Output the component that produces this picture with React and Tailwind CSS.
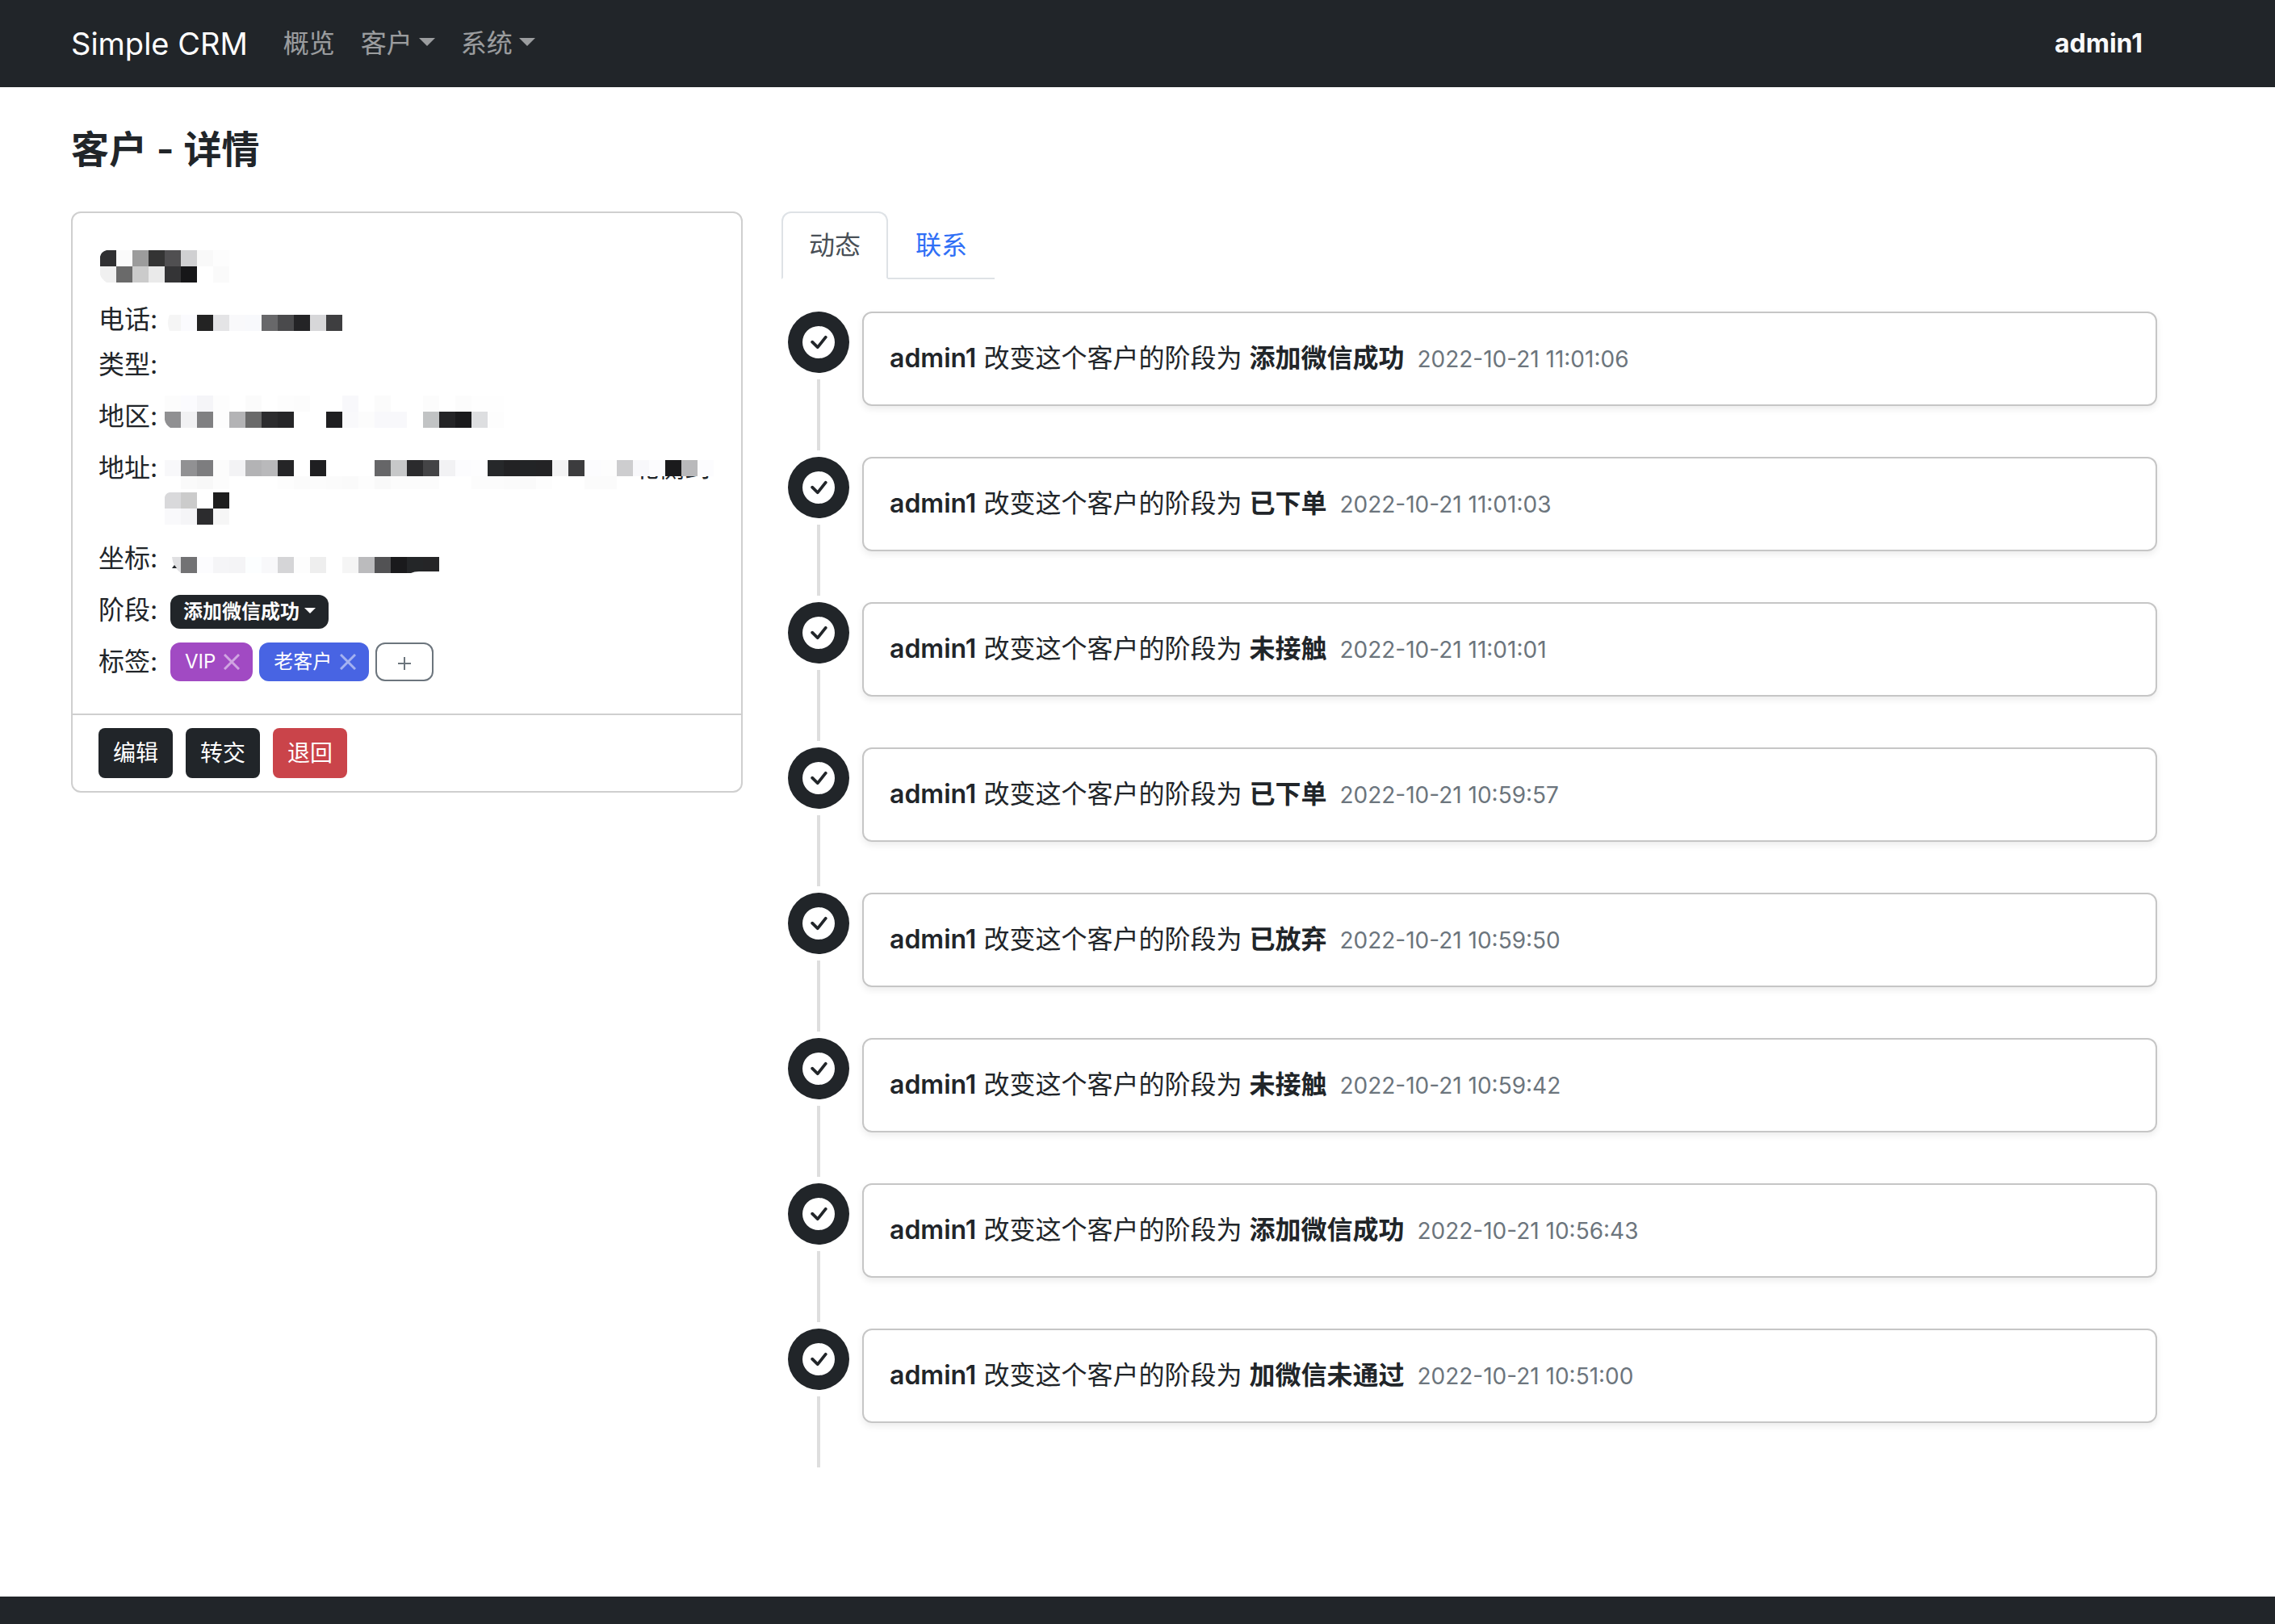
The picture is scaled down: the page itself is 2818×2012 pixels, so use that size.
const FONT = "font-['Inter','Noto_Sans_CJK_SC',sans-serif]";

const NAME = [
  { x: 2, y: 0, cells: ['#303032', '#fbfbfb', '#9c9c9c', '#343434', '#504f51', '#d0d0d2', '#f9f9f9', '#fdfdfd'] },
  { x: 2, y: 20, cells: ['#f0f0f0', '#6a6a6a', '#cbcbcb', '#eaeaea', '#343436', '#161618', '#ffffff', '#fafafa'] },
];

const PHONE = [
  { x: 0, y: 18, cells: ['#f5f5f5', '#fbfbfe', '#232323', '#e4e4e6', '#f9f9fb', '#f8f9fc', '#68686a', '#4a4a4c', '#242426', '#d7d7d9', '#3e3e40'] },
];

const REGION = [
  { x: 0, y: -2, cells: ['#fcfcfc', '#fbfbfe', '#f5f5f8', '#fdfdfd', null, '#fbfbfb', null, '#fdfdfd', '#fcfcfc', null, null, '#f8f8fb', null, '#fbfbfb', null, null, '#fcfcfc', null, '#fcfcfc', '#fefefe', '#fefefe'] },
  { x: 0, y: 18, cells: ['#909092', '#f1f1f3', '#808082', '#fdfdfd', '#b3b3b5', '#6a6a6a', '#2c2c2e', '#262628', null, null, '#1f1f21', '#f9f9fb', '#fcfcfc', '#f8f8fb', '#f8f8fb', null, '#c1c3c4', '#242426', '#1a1a1c', '#dddee0', '#fdfdfd'] },
];

const ADDRESS = [
  { x: 0, y: 14, cells: ['#f8f8fa', '#919193', '#7d7d7f', '#fcfcfc', '#f3f3f5', '#b3b3b5', '#b9b9bb', '#252527', null, '#1f1f21', null, null, null, '#666668', '#c7c8c9', '#2b2b2d', '#444446', '#f2f2f4', '#fcfcfe', '#fdfdfe', '#26282a', '#222224', '#222426', '#232325', '#f3f3f4', '#3c3c3e', '#fcfcfe', '#fdfdfd', '#cdcdcf', '#f8f8fb', '#fcfcfe', '#1a1a1c', '#b9b9bb', '#fcfcfe'] },
  { x: 0, y: 34, h: 16, cells: [null, '#fafafa', '#f8f8f8', '#fcfcfc', null, null, null, '#fdfdfd', '#fbfbfb', '#fcfcfc', '#fbfbfb', '#fafafa', '#fdfdfd', '#f9f9f9', '#fcfcfc', '#fcfcfc', '#fcfcfc', null, null, '#fcfcfc', '#fcfcfc', '#fbfbfb', '#fafafa', '#fdfdfd', null, null, '#fbfbfb', '#fbfbfb'] },
  { x: 0, y: 54, cells: ['#d9d9db', '#cbcbcb', null, '#1e1e1e'] },
  { x: 0, y: 74, cells: ['#f9f9fb', '#f5f5f7', '#2c2c2e', '#f6f6f6'] },
];

const COORDS = [
  { x: 20, y: 22, cells: ['#727274', '#fcfcfe', '#f5f5f7', '#f4f4f6', '#fcfeff', '#f8f8fa', '#d5d5d7', '#fdfdfd', '#eeeeee', null, '#f5f5f5', '#bbbbbd', '#525254', '#1a1a1c', '#242628', '#252527'] },
];

const ACTIVITY = [
  ['添加微信成功', '2022-10-21 11:01:06'],
  ['已下单', '2022-10-21 11:01:03'],
  ['未接触', '2022-10-21 11:01:01'],
  ['已下单', '2022-10-21 10:59:57'],
  ['已放弃', '2022-10-21 10:59:50'],
  ['未接触', '2022-10-21 10:59:42'],
  ['添加微信成功', '2022-10-21 10:56:43'],
  ['加微信未通过', '2022-10-21 10:51:00'],
];

/* Pixelated block that hides private data */
function Mosaic({ rows, width, height, className = '', children }) {
  return (
    <svg width={width} height={height} className={`block overflow-visible ${className}`} shapeRendering="crispEdges" aria-hidden="true">
      {rows.map((r) =>
        r.cells.map((c, i) => c && <rect key={`${r.y}-${i}`} x={r.x + i * 20} y={r.y} width="20" height={r.h || 20} fill={c} />)
      )}
      {children}
    </svg>
  );
}

/* White wedge that rounds off a corner of a mosaic */
function Corner({ d }) {
  return <path d={d} fill="#fff" shapeRendering="auto" />;
}

function Caret({ className }) {
  return (
    <svg viewBox="0 0 20 10" className={className} fill="currentColor" aria-hidden="true">
      <path d="M0 0h20L10 10z" />
    </svg>
  );
}

function CheckIcon() {
  return (
    <svg viewBox="0 0 16 16" className="size-10" fill="#fff" aria-hidden="true">
      <path d="M16 8A8 8 0 1 1 0 8a8 8 0 0 1 16 0zm-3.97-3.03a.75.75 0 0 0-1.08.022L7.477 9.417 5.384 7.323a.75.75 0 0 0-1.06 1.06L6.97 11.03a.75.75 0 0 0 1.079-.02l3.992-4.99a.75.75 0 0 0-.01-1.05z" />
    </svg>
  );
}

function Row({ label, className = 'mt-4', children }) {
  return (
    <div className={`flex ${className}`}>
      <dt className="w-[82px] shrink-0">{label}</dt>
      <dd className="min-w-0 flex-1">{children}</dd>
    </div>
  );
}

function Tag({ color, children }) {
  return (
    <span className={`flex h-12 items-center gap-[10px] rounded-xl pr-4 pl-[18px] text-[24px] leading-[36px] text-white ${color}`}>
      {children}
      <button type="button" aria-label="移除标签" className="opacity-50">
        <svg viewBox="0 0 20 20" className="size-5" fill="none" stroke="#fff" strokeWidth="3" aria-hidden="true">
          <path d="M1 1l18 18M19 1L1 19" />
        </svg>
      </button>
    </span>
  );
}

function ActionButton({ color, children }) {
  return (
    <button type="button" className={`h-[62px] rounded-lg px-[18px] text-[28px] leading-[42px] text-white ${color}`}>
      {children}
    </button>
  );
}

function Navbar() {
  return (
    <nav className="flex h-[108px] items-center bg-[#212529] pr-[164px] pl-[88px] text-[32px] leading-[48px] text-white/55">
      <a href="#" className="mr-11 text-[38px] leading-[60px] text-white">Simple CRM</a>
      <div className="flex gap-8">
        <a href="#">概览</a>
        <button type="button" className="flex items-center gap-2">
          客户
          <Caret className="mb-1 h-[10px] w-5" />
        </button>
        <button type="button" className="flex items-center gap-2">
          系统
          <Caret className="mb-1 h-[10px] w-5" />
        </button>
      </div>
      <a href="#" className="ml-auto font-bold text-[#f8f9fa]">admin1</a>
    </nav>
  );
}

function CustomerCard() {
  return (
    <section className="self-start rounded-xl border-2 border-[#cfcfcf]">
      <div className="px-8 pt-8 pb-10">
        <div className="h-[76px] pt-[14px]">
          <Mosaic rows={NAME} width={162} height={40}>
            <Corner d="M0 0h10Q3 2 2 8H0z" />
            <Corner d="M0 40h10Q3 35 2 30H0z" />
          </Mosaic>
        </div>
        <dl>
          <Row label="电话:" className="">
            <Mosaic rows={PHONE} width={220} height={48}>
              <Corner d="M0 18h6Q2 28 6 38H0z" />
            </Mosaic>
          </Row>
          <Row label="类型:" className="mt-2" />
          <Row label="地区:">
            <Mosaic rows={REGION} width={420} height={48}>
              <Corner d="M0 38h7Q1 34 0 28z" />
            </Mosaic>
          </Row>
          <Row label="地址:">
            <div className="relative h-24">
              <span className="block pl-[580px] whitespace-nowrap">北侧到</span>
              <Mosaic rows={ADDRESS} width={680} height={96} className="absolute top-0 left-0">
                <rect x="560" y="0" width="120" height="14" fill="#fff" />
                <Corner d="M0 54h6Q1 55 0 60z" />
              </Mosaic>
            </div>
          </Row>
          <Row label="坐标:">
            <Mosaic rows={COORDS} width={340} height={48}>
              <path d="M9 22h11v20Q10 34 9 22z" fill="#e0e0e2" shapeRendering="auto" />
              <path d="M9 36l3-4 3 4z" fill="#212529" shapeRendering="auto" />
              <Corner d="M305 42q4-2 10-2h25v2z" />
            </Mosaic>
          </Row>
          <Row label="阶段:">
            <div className="flex h-12 items-center pl-[7px]">
              <button type="button" className="mt-1 flex h-[42px] items-center gap-[6px] rounded-xl bg-[#212529] px-4 text-[24px] leading-6 font-bold text-white">
                添加微信成功
                <Caret className="mb-1 h-[7px] w-[14px]" />
              </button>
            </div>
          </Row>
          <Row label="标签:">
            <div className="flex gap-2 pl-[7px]">
              <Tag color="bg-[#a14ac3]">VIP</Tag>
              <Tag color="bg-[#4864e3]">老客户</Tag>
              <button type="button" aria-label="添加标签" className="flex h-12 w-[72px] items-center justify-center rounded-xl border-2 border-[#6c757d] text-[#6c757d]">
                <svg viewBox="0 0 16 16" className="mt-1 size-4" fill="none" stroke="currentColor" strokeWidth="2" aria-hidden="true">
                  <path d="M8 0v16M0 8h16" />
                </svg>
              </button>
            </div>
          </Row>
        </dl>
      </div>
      <div className="flex gap-4 border-t-2 border-[#cfcfcf] px-8 py-4">
        <ActionButton color="bg-[#212529]">编辑</ActionButton>
        <ActionButton color="bg-[#212529]">转交</ActionButton>
        <ActionButton color="bg-[#ca444a]">退回</ActionButton>
      </div>
    </section>
  );
}

function Activity({ stage, time }) {
  return (
    <li className="flex min-h-[180px] gap-4">
      <div className="flex flex-col items-center">
        <span className="flex size-[76px] items-center justify-center rounded-full bg-[#212529]">
          <CheckIcon />
        </span>
        <span className="my-2 w-1 flex-1 bg-[#dedede]" />
      </div>
      <div className="flex-1 self-start rounded-xl border-2 border-[#c6c6c6] p-8 shadow-[0_4px_8px_rgba(0,0,0,0.075)]">
        <p>
          <strong className="font-semibold">admin1</strong> 改变这个客户的阶段为 <strong className="font-bold">{stage}</strong>
          <time className="ml-4 text-[28px] text-[#6c757d]">{time}</time>
        </p>
      </div>
    </li>
  );
}

export default function App() {
  return (
    <div className={`flex min-h-screen flex-col bg-white text-[32px] leading-[48px] text-[#212529] ${FONT}`}>
      <Navbar />
      <main className="pt-12 pr-[138px] pb-[152px] pl-[88px]">
        <h1 className="mb-12 text-[47px] leading-[58px] font-semibold">客户 - 详情</h1>
        <div className="grid grid-cols-3 gap-x-12">
          <CustomerCard />
          <section className="col-span-2">
            <div role="tablist" className="inline-flex align-top">
              <button type="button" role="tab" aria-selected="true" className="rounded-t-xl border-2 border-[#dee2e6] border-b-white px-8 py-4 text-[#495057]">动态</button>
              <button type="button" role="tab" aria-selected="false" className="border-b-2 border-[#dee2e6] px-[34px] pt-[18px] pb-4 text-[#2f6ff6]">联系</button>
            </div>
            <ul className="mt-10 px-2">
              {ACTIVITY.map(([stage, time]) => (
                <Activity key={time} stage={stage} time={time} />
              ))}
            </ul>
          </section>
        </div>
      </main>
      <footer className="min-h-[34px] flex-1 bg-[#212529]" />
    </div>
  );
}
